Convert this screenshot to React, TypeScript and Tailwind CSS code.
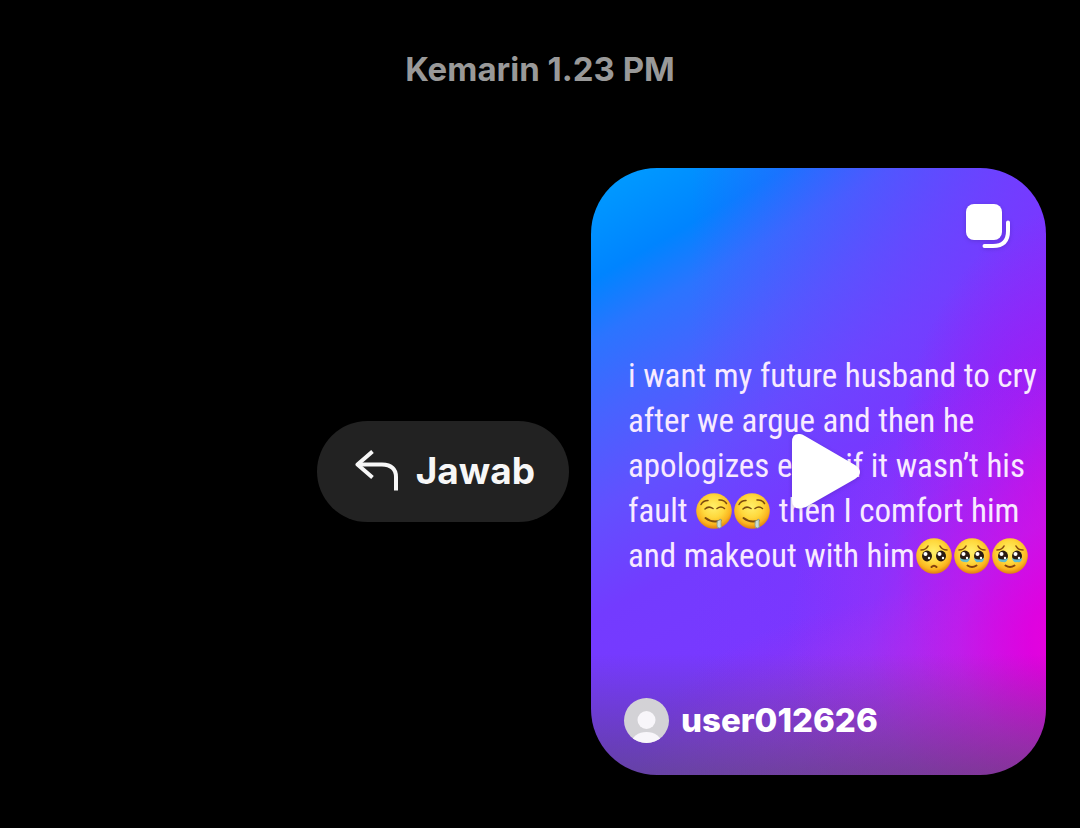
import { useId } from "react";

type Mood = "drooling" | "pleading" | "tears";

const moodLabels: Record<Mood, string> = {
  drooling: "🤤",
  pleading: "🥺",
  tears: "🥹",
};

function ReplyIcon() {
  return (
    <svg
      viewBox="0 0 44 42"
      className="h-[42px] w-11 shrink-0"
      fill="none"
      stroke="currentColor"
      strokeWidth="4"
      aria-hidden="true"
    >
      <path d="M17.5 1.500 2.500 14.500l15 13" strokeLinejoin="round" />
      <path d="M2.500 14.500H27q14 .5 14 12.500V40.500" />
    </svg>
  );
}

function CarouselIcon() {
  return (
    <svg
      viewBox="0 0 44 44"
      className="size-11 drop-shadow-sm"
      fill="none"
      aria-hidden="true"
    >
      <rect width="36" height="36" rx="8" fill="white" />
      <path
        d="M42 18.500V27q0 15-15 15H18.500"
        stroke="white"
        strokeWidth="4"
        strokeLinecap="round"
      />
    </svg>
  );
}

function PlayIcon() {
  return (
    <svg
      viewBox="0 0 84 76"
      className="h-[76px] w-[84px] drop-shadow-sm"
      aria-hidden="true"
    >
      <path
        d="M15 9Q15 0 23 1q2 0 5 2L78 32q10 7 0 14L29 74q-14 5-14-7Z"
        fill="white"
      />
    </svg>
  );
}

function Avatar() {
  return (
    <span className="relative block size-[45px] shrink-0 overflow-hidden rounded-full bg-[#d3d2d6]">
      <svg viewBox="0 0 45 45" fill="#f8f6fa" aria-hidden="true">
        <circle cx="22.500" cy="22" r="9" />
        <ellipse cx="22.500" cy="45" rx="15" ry="11" />
      </svg>
    </span>
  );
}

function Emoji({ mood }: { mood: Mood }) {
  const id = useId();

  return (
    <svg
      viewBox="0 0 38 38"
      className="inline-block size-[38px] align-[-8px]"
      role="img"
      aria-label={moodLabels[mood]}
    >
      <defs>
        <radialGradient id={id} cx="48%" cy="38%" r="62%">
          <stop offset="0" stopColor="#fff06a" />
          <stop offset="0.5" stopColor="#ffd83c" />
          <stop offset="0.8" stopColor="#fbb41f" />
          <stop offset="1" stopColor="#df7d12" />
        </radialGradient>
      </defs>
      <circle cx="19" cy="19" r="17.800" fill={`url(#${id})`} />
      {mood === "drooling" ? (
        <g fill="none" stroke="#7a4a10" strokeWidth="1.500" strokeLinecap="round">
          <path d="M6 12.500q2-4 7-4M24 8q5-.5 7.500 3.500" />
          <path d="M10 17q3.500-3.500 8-.5M22 16.500q4-3 7.500 0" />
          <path d="M10.500 26q7 5.500 15 2.500" strokeWidth="2" />
          <path
            d="M22.500 29q2.500-1 3.500-2v6q1 3-1.500 3-3 0-2.500-3Z"
            fill="#c9dcd8"
            stroke="#7e9d96"
            strokeWidth="0.800"
          />
        </g>
      ) : (
        <g>
          <path
            d="M6 13q5 0 7-4M25 9q2 4 7 4"
            fill="none"
            stroke="#8a4d10"
            strokeWidth="1.600"
            strokeLinecap="round"
          />
          <ellipse cx="12" cy="19" rx="5" ry="5.400" fill="#291a12" />
          <ellipse cx="26" cy="19" rx="5" ry="5.400" fill="#291a12" />
          <g fill="white">
            <circle cx="10.500" cy="17" r="2" />
            <circle cx="24.500" cy="17" r="2" />
            <circle cx="14" cy="21" r="1.200" />
            <circle cx="28" cy="21" r="1.200" />
          </g>
          {mood === "tears" && (
            <path
              d="M7 21q5 3 10 0-1 5-5 4-5 0-5-4M21 21q5 3 10 0 0 5-5 4-4 1-5-4"
              fill="#62bfd0"
            />
          )}
          <path
            d={mood === "tears" ? "M14.500 28.500q4.500 3 9 0" : "M16.500 30q2.500-2.500 5 0"}
            fill="none"
            stroke="#86420f"
            strokeWidth="2"
            strokeLinecap="round"
          />
        </g>
      )}
    </svg>
  );
}

function ReelCard() {
  return (
    <article className="relative flex aspect-3/4 w-[455px] shrink-0 flex-col overflow-hidden rounded-[66px] bg-[linear-gradient(to_bottom,transparent_80%,rgba(80,70,90,0.55)_100%),radial-gradient(ellipse_65%_48%_at_108%_78%,#ee00da_0%,rgba(228,0,222,0.9)_18%,rgba(215,20,230,0.6)_42%,rgba(190,40,240,0.25)_72%,transparent_100%),radial-gradient(ellipse_90%_30%_at_100%_98%,rgba(205,30,200,0.6)_0%,transparent_100%),radial-gradient(ellipse_42%_50%_at_108%_56%,rgba(215,0,220,0.9)_0%,rgba(185,10,235,0.5)_50%,transparent_100%),linear-gradient(to_right,transparent_22%,rgba(128,48,255,0.8)_100%),linear-gradient(150deg,#0099ff_3%,#0084ff_13%,#2b74ff_20%,#4763ff_29%,#6250ff_40%,#733bff_52%,#7a38ff_68%,#8c48ff_85%)] text-white">
      <header className="flex justify-end px-9 pt-9">
        <CarouselIcon />
      </header>
      <div className="flex grow flex-col justify-center pb-3.5 pl-[37px]">
        <p className="font-['Roboto_Condensed',sans-serif] text-[33px] leading-[45px] whitespace-nowrap text-[#f8eaff]">
          i want my future husband to cry
          <br />
          after we argue and then he
          <br />
          apologizes even if it wasn’t his
          <br />
          fault <Emoji mood="drooling" />
          <Emoji mood="drooling" /> then I comfort him
          <br />
          and makeout with him
          <Emoji mood="pleading" />
          <Emoji mood="tears" />
          <Emoji mood="tears" />
        </p>
      </div>
      <footer className="flex items-center gap-3 px-[33px] pb-8">
        <Avatar />
        <span className="text-[33px] leading-[45px] font-extrabold">
          user012626
        </span>
      </footer>
      <button
        type="button"
        aria-label="Putar"
        className="absolute inset-0 flex items-center justify-center"
      >
        <PlayIcon />
      </button>
    </article>
  );
}

export default function App() {
  return (
    <main className="min-h-screen bg-black pt-12 pb-12 font-['Inter',sans-serif]">
      <time className="block text-center text-[33px] leading-[42px] font-bold text-[#999999]">
        Kemarin 1.23 PM
      </time>
      <div className="mt-[78px] flex items-center justify-end gap-[22px] pr-[34px]">
        <button
          type="button"
          className="flex h-[101px] items-center gap-[17px] rounded-full bg-[#222222] pr-[34px] pl-[38px] text-[#f7f7f7]"
        >
          <ReplyIcon />
          <span className="text-[37px] leading-[42px] font-bold">Jawab</span>
        </button>
        <ReelCard />
      </div>
    </main>
  );
}
